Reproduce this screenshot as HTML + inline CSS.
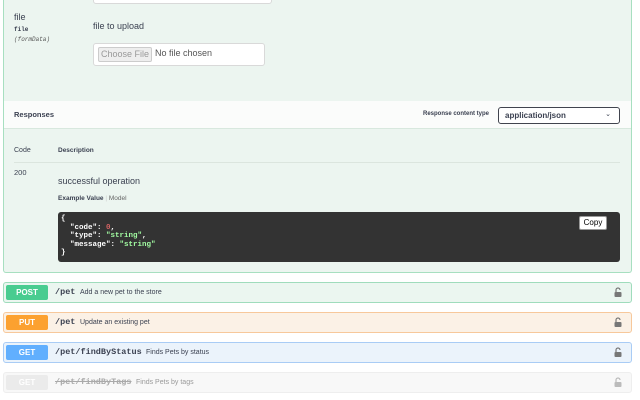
<!DOCTYPE html>
<html><head><style>
*{box-sizing:border-box;margin:0;padding:0}
body{width:640px;height:400px;overflow:hidden;background:#fff;font-family:"Liberation Sans",sans-serif;color:#3b4151;position:relative}
.a{position:absolute}
.mono{font-family:"Liberation Mono",monospace}
.op{position:absolute;left:3px;width:629px;height:21px;border:1px solid;border-radius:3px}
.badge{position:absolute;left:2px;top:2px;width:42px;height:15px;border-radius:2px;color:#fff;font-weight:bold;font-size:8px;text-align:center;line-height:15px}
.path{position:absolute;left:51px;top:4px;font-family:"Liberation Mono",monospace;font-weight:bold;font-size:8.5px;line-height:11px}
.desc{position:absolute;top:5px;font-size:7px;line-height:10px}
.lock{position:absolute;right:9px;top:4px;width:8px;height:10px}
</style></head><body>
<div class="a" style="left:3px;top:-2px;width:629px;height:275px;background:#ecf5f0;border:1px solid #a7dfc0;border-top:none;border-radius:0 0 3px 3px"></div>
<div class="a" style="left:93px;top:-6px;width:179px;height:10px;background:#fff;border:1px solid #d9d9d9;border-radius:3px"></div>
<div class="a" style="left:14px;top:12px;font-size:9px;color:#3b4151">file</div>
<div class="a mono" style="left:14px;top:26px;font-size:6px;font-weight:bold">file</div>
<div class="a mono" style="left:14px;top:36px;font-size:6px;font-style:italic;color:#555">(formData)</div>
<div class="a" style="left:93px;top:21px;font-size:9px">file to upload</div>
<div class="a" style="left:93px;top:43px;width:172px;height:23px;background:#fff;border:1px solid #d9d9d9;border-radius:3px"></div>
<div class="a" style="left:98px;top:47px;width:54px;height:15px;background:#eee;border:1px solid #ccc;border-radius:2px;font-size:9px;color:#999;text-align:center;line-height:13px">Choose File</div>
<div class="a" style="left:155px;top:48px;font-size:9px;color:#555">No file chosen</div>
<div class="a" style="left:4px;top:101px;width:627px;height:28px;background:#fbfcfb;border-bottom:1px solid #d8e8de"></div>
<div class="a" style="left:14px;top:110px;font-size:7.5px;font-weight:bold">Responses</div>
<div class="a" style="left:423px;top:111px;font-size:6px;font-weight:bold">Response content type</div>
<div class="a" style="left:498px;top:107px;width:122px;height:17px;background:#fff;border:1px solid #41444e;border-radius:3px;font-size:8px;font-weight:bold;padding:3px 0 0 6px">application/json<span style="position:absolute;right:8px;top:2px;font-size:7px;font-weight:normal">⌄</span></div>
<div class="a" style="left:14px;top:147px;font-size:7px">Code</div>
<div class="a" style="left:58px;top:147px;font-size:6.5px;font-weight:bold">Description</div>
<div class="a" style="left:14px;top:162px;width:606px;height:1px;background:#dbe5de"></div>
<div class="a" style="left:14px;top:168px;font-size:7.5px">200</div>
<div class="a" style="left:58px;top:176px;font-size:9px">successful operation</div>
<div class="a" style="left:58px;top:195px;font-size:6.5px"><b>Example Value</b> <span style="color:#ccc">|</span> <span style="color:#666">Model</span></div>
<div class="a mono" style="left:58px;top:212px;width:562px;height:50px;background:#333;border-radius:3px;color:#fff;font-size:7.5px;font-weight:bold;line-height:8.5px;padding:3px 3px;white-space:pre">{
  "code": <span style="color:#d36363">0</span>,
  "type": <span style="color:#a2fca2">"string"</span>,
  "message": <span style="color:#a2fca2">"string"</span>
}</div>
<div class="a" style="left:579px;top:216px;width:28px;height:14px;background:#fff;border:1px solid #999;border-radius:2px;font-size:8px;color:#000;text-align:center;line-height:12px">Copy</div>

<div class="op" style="top:282px;background:#ebf6f0;border-color:#9fdcbc"><div class="badge" style="background:#49cc90">POST</div><div class="path">/pet</div><div class="desc" style="left:76px">Add a new pet to the store</div><svg class="lock" viewBox="0 0 8 10"><path d="M2 5V3a2 2 0 0 1 4 0" fill="none" stroke="#777" stroke-width="1.2"/><rect x="0.5" y="5" width="7" height="5" rx="1" fill="#777"/></svg></div>
<div class="op" style="top:312px;background:#fbf1e6;border-color:#f7c89b"><div class="badge" style="background:#fca130">PUT</div><div class="path">/pet</div><div class="desc" style="left:76px">Update an existing pet</div><svg class="lock" viewBox="0 0 8 10"><path d="M2 5V3a2 2 0 0 1 4 0" fill="none" stroke="#777" stroke-width="1.2"/><rect x="0.5" y="5" width="7" height="5" rx="1" fill="#777"/></svg></div>
<div class="op" style="top:342px;background:#ebf3fb;border-color:#a9ccf5"><div class="badge" style="background:#61affe">GET</div><div class="path">/pet/findByStatus</div><div class="desc" style="left:142px">Finds Pets by status</div><svg class="lock" viewBox="0 0 8 10"><path d="M2 5V3a2 2 0 0 1 4 0" fill="none" stroke="#777" stroke-width="1.2"/><rect x="0.5" y="5" width="7" height="5" rx="1" fill="#777"/></svg></div>
<div class="op" style="top:372px;background:#f8f8f8;border-color:#eee"><div class="badge" style="background:#ebebeb">GET</div><div class="path" style="color:#aaa;text-decoration:line-through">/pet/findByTags</div><div class="desc" style="left:132px;color:#999">Finds Pets by tags</div><svg class="lock" viewBox="0 0 8 10"><path d="M2 5V3a2 2 0 0 1 4 0" fill="none" stroke="#bbb" stroke-width="1.2"/><rect x="0.5" y="5" width="7" height="5" rx="1" fill="#bbb"/></svg></div>
</body></html>
